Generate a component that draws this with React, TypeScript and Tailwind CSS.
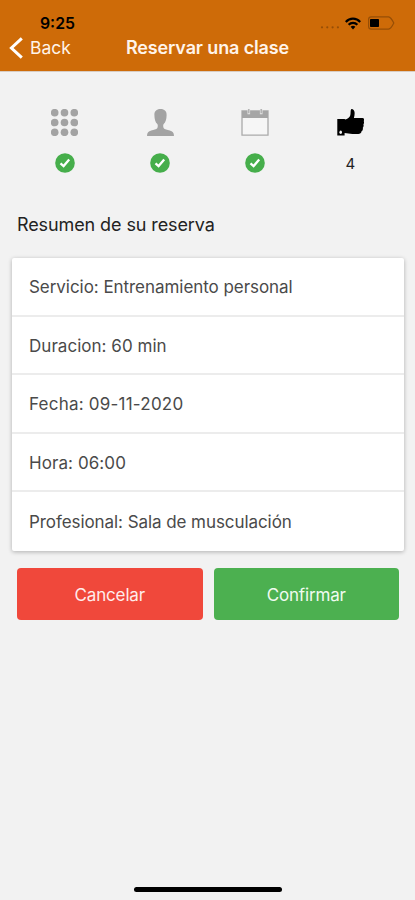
import type { ReactNode } from "react";

const details = [
  { label: "Servicio", value: "Entrenamiento personal", className: "tracking-[-0.05px]" },
  { label: "Duracion", value: "60 min", className: "tracking-[0.03px]" },
  { label: "Fecha", value: "09-11-2020", className: "tracking-[0.22px]" },
  { label: "Hora", value: "06:00", className: "tracking-[0.08px]" },
  { label: "Profesional", value: "Sala de musculación", className: "tracking-[-0.07px]" },
];

const GridIcon = () => (
  <svg width="27" height="27" viewBox="0 0 27 27" fill="#a3a3a3">
    {[3.7, 13.5, 23.3].map((y) =>
      [3.7, 13.5, 23.3].map((x) => <circle key={`${x}-${y}`} cx={x} cy={y} r="3.8" />)
    )}
  </svg>
);

const PersonIcon = () => (
  <svg className="ml-px" width="27" height="27" viewBox="0 0 27 27" fill="#a3a3a3">
    <path d="M13.5 0C9.4 0 7.2 2.3 7.4 6.2C7.5 9.8 8.2 13.2 10.3 15.1C11 16 10.9 17.8 10.4 18.9C9.4 20.3 6.8 20.7 4.2 21.6C1.5 22.6 0 23.7 0 27H27C27 23.7 25.5 22.6 22.8 21.6C20.2 20.7 17.6 20.3 16.6 18.9C16.1 17.8 16 16 16.7 15.1C18.8 13.2 19.5 9.8 19.6 6.2C19.8 2.3 17.6 0 13.5 0Z" />
  </svg>
);

const CalendarIcon = () => (
  <svg width="28" height="27" viewBox="0 0 28 27">
    <path d="M1 2H27V26.2H1Z" fill="#f6f6f6" stroke="#aaa" strokeWidth="1.3" />
    <path d="M1 2H27V9H1Z" fill="#a6a6a6" />
    <path d="M7.8 0V5.2M20.2 0V5.2" stroke="#e6e6e6" strokeWidth="2.6" />
    <path d="M7.8 0V4.2M20.2 0V4.2" stroke="#aaa" strokeWidth="1.3" />
  </svg>
);

const ThumbIcon = () => (
  <svg width="27" height="27" viewBox="0 0 27 27">
    <path
      d="M0.3 10H7.6L8.2 10.6C10.4 10 12.8 8.4 13.3 6.3C13.8 4.6 13.3 1.1 14.2 0.3C15.2-.4 16.9.5 17.4 2.5C17.9 4.6 17.5 7 16.9 9H25.5C27.2 9 27.5 10.8 26.7 12C27.3 13 27.1 14.5 26.4 15.3C26.9 16.6 26.6 18 25.8 18.7C26.2 20.2 25.6 21.6 24.5 22.2C24.4 24 23 24.9 21.3 24.9H15.5C12.5 24.9 10.3 24 7.6 24V26.6H0.3Z"
      fill="#000"
    />
    <ellipse cx="3.7" cy="23.3" rx="1.3" ry="1.8" fill="#f2f2f2" />
  </svg>
);

const Check = () => (
  <svg width="20" height="20" viewBox="0 0 20 20">
    <circle cx="10" cy="10" r="9.8" fill="#46ae4b" />
    <path d="M5.5 10.3L8.6 13.1L14.2 6.6" fill="none" stroke="#fff" strokeWidth="2.3" />
  </svg>
);

const Step = ({ icon, children }: { icon: ReactNode; children: ReactNode }) => (
  <div className="flex flex-1 flex-col items-center">
    {icon}
    <div className="mt-[17px] flex h-5 items-center text-[15px] text-[#222]">{children}</div>
  </div>
);

const StatusBar = () => (
  <div className="flex h-[34px] items-end justify-between pr-[20px] pl-10 text-black">
    <span className="mb-[1px] text-[15.8px] leading-[18px] font-semibold">9:25</span>
    <div className="mb-[4px] flex h-[14px] items-center">
      <svg width="20" height="14" viewBox="0 0 20 14" fill="#000" fillOpacity="0.27">
        <circle cx="2" cy="11.3" r="1.1" />
        <circle cx="7.3" cy="11.3" r="1.1" />
        <circle cx="12.6" cy="11.3" r="1.1" />
        <circle cx="17.9" cy="11.3" r="1.1" />
      </svg>
      <svg className="ml-[5px]" width="16" height="13" viewBox="0 0 16 13" fill="none" stroke="#000" strokeWidth="2.1">
        <path d="M0.8 5C4.8 0.5 11.2 0.5 15.2 5" />
        <path d="M3.6 7.8C6 5.2 10 5.2 12.4 7.8" />
        <path d="M8 12.4L5.6 9.8Q8 7.8 10.4 9.8Z" fill="#000" stroke="none" />
      </svg>
      <svg className="ml-[7px]" width="27" height="14" viewBox="0 0 27 14">
        <path
          d="M3.2 0.8H20.5Q23 1.2 25.8 7Q23 12.8 20.5 13.2H3.2Q0.6 13.2 0.6 10.6V3.4Q0.6 0.8 3.2 0.8Z"
          fill="none"
          stroke="#000"
          strokeOpacity="0.27"
          strokeWidth="1.2"
        />
        <rect x="2" y="3" width="9" height="8" rx="0.8" fill="#000" />
      </svg>
    </div>
  </div>
);

const App = () => {
  return (
    <div className="flex h-[900px] w-[415px] flex-col overflow-hidden bg-[#f2f2f2] font-['Inter','Liberation_Sans',sans-serif]">
      <header className="h-[71px] shrink-0 bg-[#ce6b08] shadow-[0_1px_0_#d8ccc2]">
        <StatusBar />
        <div className="grid h-[26px] grid-cols-[1fr_auto_1fr] items-center text-[#fff4ea]">
          <div className="flex items-center pl-[9px]">
            <svg width="14" height="22" viewBox="0 0 14 22" fill="none" stroke="#fff" strokeWidth="3">
              <path d="M12.8 1.3L2.4 11L12.8 20.7" />
            </svg>
            <span className="ml-[7px] pt-px text-[17.5px]">Back</span>
          </div>
          <h1 className="text-[18px] font-semibold tracking-[-0.13px]">Reservar una clase</h1>
        </div>
      </header>

      <div className="mt-[38px] flex px-[17px]">
        <Step icon={<GridIcon />}>
          <Check />
        </Step>
        <Step icon={<PersonIcon />}>
          <Check />
        </Step>
        <Step icon={<CalendarIcon />}>
          <Check />
        </Step>
        <Step icon={<ThumbIcon />}>
          <span className="pt-[2px]">4</span>
        </Step>
      </div>

      <h2 className="mt-[40px] ml-[17px] h-6 text-[18px] leading-6 tracking-[-0.1px] text-[#222]">
        Resumen de su reserva
      </h2>

      <ul className="mx-[12px] mt-[21px] grid h-[293px] w-[392px] shrink-0 grid-rows-5 divide-y-2 divide-[#ececec] rounded-[2px] bg-white shadow-[0_1px_4px_rgba(0,0,0,0.28)]">
        {details.map(({ label, value, className }) => (
          <li
            key={label}
            className={`flex items-center pt-[3px] pl-[17px] text-[17px] text-[#4a4a4a] ${className}`}
          >
            {label}: {value}
          </li>
        ))}
      </ul>

      <div className="mt-[17px] flex gap-[11px] pr-[16px] pl-[17px] text-[17px] tracking-[-0.15px]">
        <button className="h-[52px] flex-1 rounded-[4px] bg-[#f0483b] pt-[3px] text-[#ffeceb]">
          Cancelar
        </button>
        <button className="h-[52px] flex-1 rounded-[4px] bg-[#4cb050] pt-[3px] text-[#f0fbf0]">
          Confirmar
        </button>
      </div>

      <div className="mt-auto mb-[8px] ml-[134px] h-[5px] w-[148px] rounded-full bg-black" />
    </div>
  );
};

export default App;
